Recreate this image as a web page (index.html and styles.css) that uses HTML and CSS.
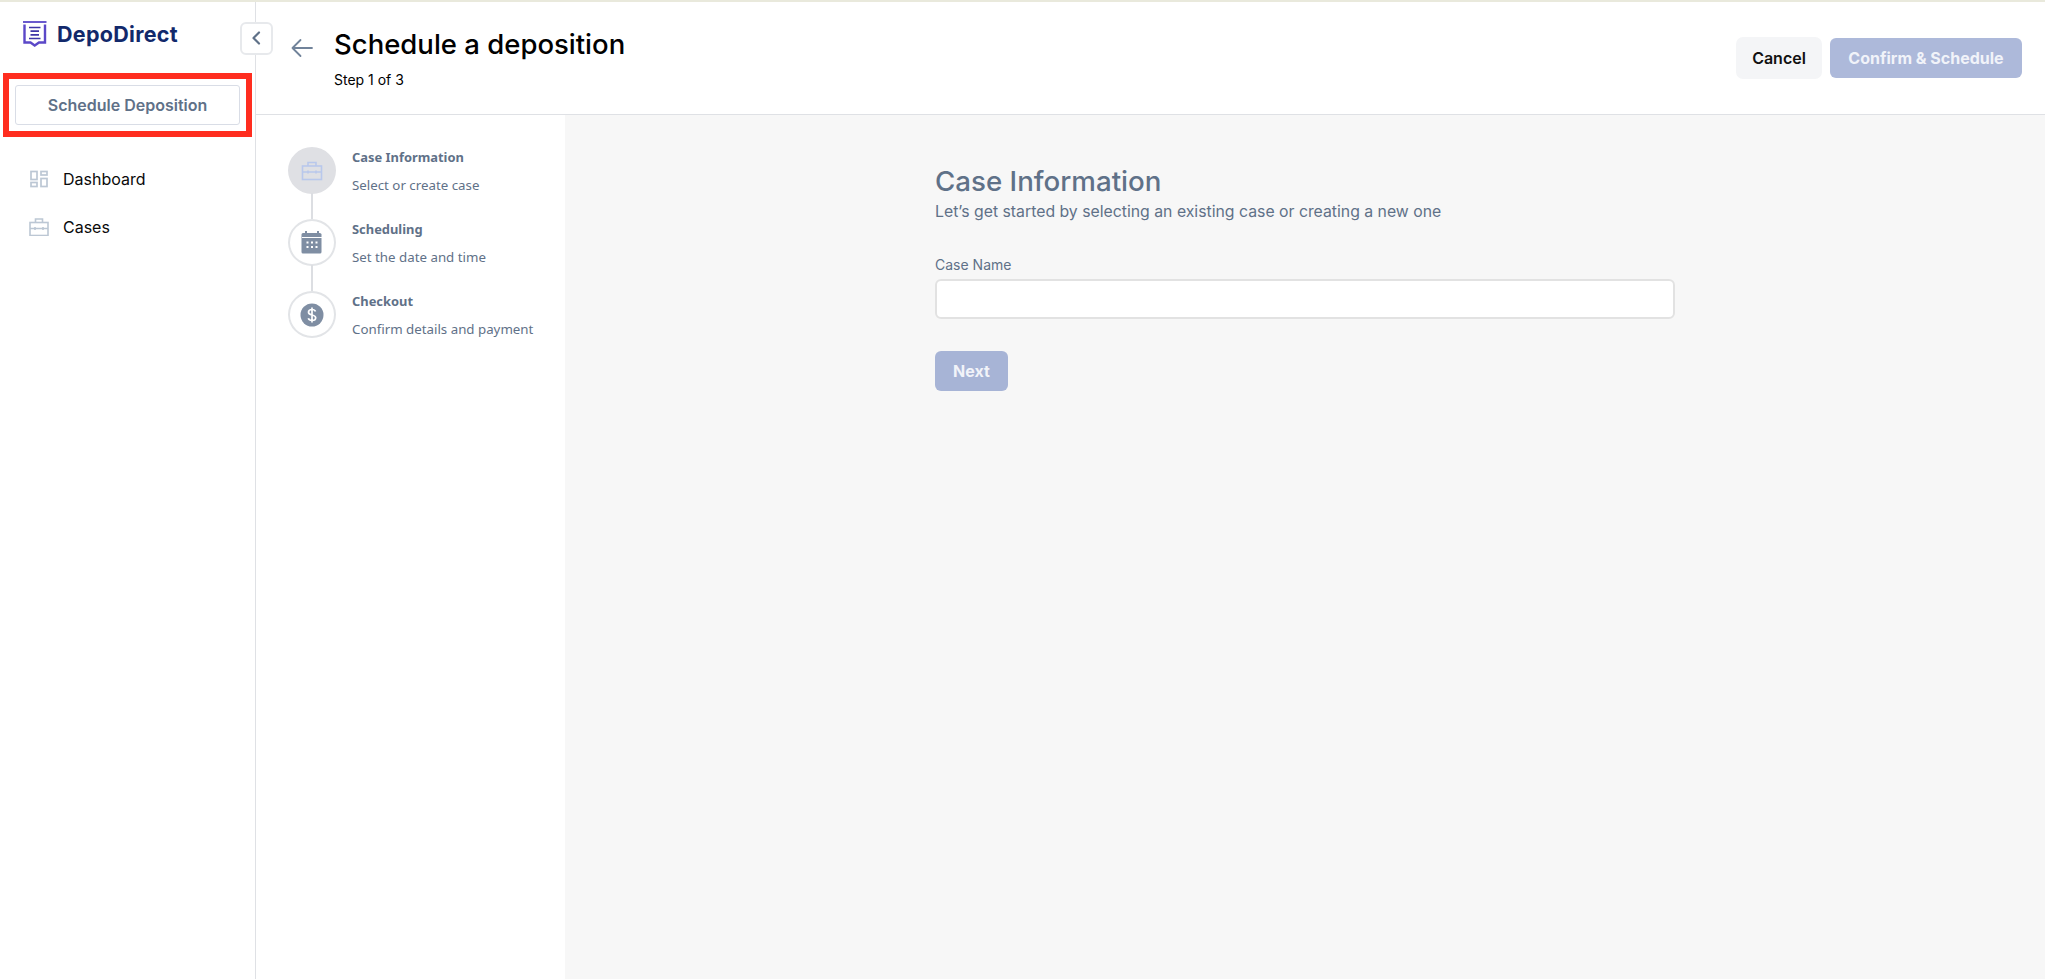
FILE: index.html
```html
<!DOCTYPE html>
<html lang="en">
<head>
<meta charset="utf-8">
<title>Schedule a deposition</title>
<link rel="stylesheet" href="styles.css">
</head>
<body>
<div class="topline"></div>
<div class="app">
  <aside class="sidebar">
    <div class="brand">
      <svg class="logo" width="24" height="27" viewBox="0 0 24 27" fill="none">
        <rect x="0" y="0" width="23.500" height="2" fill="#6a5acd"/>
        <path d="M1.500 3.500V21.500H7.500L11.700 24.500L16 21.500H22V3.500" stroke="#5b48c8" stroke-width="2.400"/>
        <path d="M6 6.500H17.500M7.500 10.200H16M7.500 13.800H16M6 17.500H17.500" stroke="#3f36a8" stroke-width="1.700"/>
      </svg>
      <span class="brand-name">DepoDirect</span>
    </div>
    <button class="collapse" type="button" aria-label="Collapse">
      <svg width="12" height="16" viewBox="0 0 12 16" fill="none"><path d="M9 2.500L3.500 8L9 13.500" stroke="#5f7188" stroke-width="2.200" stroke-linecap="round" stroke-linejoin="round"/></svg>
    </button>
    <div class="highlight"><button class="schedule" type="button">Schedule Deposition</button></div>
    <nav class="nav">
      <a class="nav-item">
        <svg width="20" height="18" viewBox="0 0 20 18" fill="none" stroke="#bcc7d4" stroke-width="1.700"><rect x="2" y="1.500" width="6" height="8"/><rect x="12" y="1.500" width="6" height="3.500"/><rect x="2" y="12.500" width="6" height="4"/><rect x="12" y="8.500" width="6" height="8"/></svg>
        <span>Dashboard</span>
      </a>
      <a class="nav-item">
        <svg width="20" height="18" viewBox="0 0 20 18" fill="none" stroke="#bcc7d4" stroke-width="1.600"><rect x="1" y="4.500" width="18" height="13"/><path d="M6.500 4.500V1H13.500V4.500M1 10.500H19M6 9V12M14 9V12"/></svg>
        <span>Cases</span>
      </a>
    </nav>
  </aside>
  <div class="content">
    <header class="header">
      <svg class="back" width="24" height="20" viewBox="0 0 24 20" fill="none"><path d="M22 10H2.500M10.500 2L2.500 10L10.500 18" stroke="#71839a" stroke-width="1.800" stroke-linecap="round" stroke-linejoin="round"/></svg>
      <div class="titles">
        <h1>Schedule a deposition</h1>
        <p>Step 1 of 3</p>
      </div>
      <div class="actions">
        <button class="btn-cancel" type="button">Cancel</button>
        <button class="btn-confirm" type="button">Confirm &amp; Schedule</button>
      </div>
    </header>
    <div class="body">
      <ol class="steps">
        <li class="step">
          <div class="circle active">
            <svg width="22" height="20" viewBox="0 0 22 20" fill="none" stroke="#b9c8ec" stroke-width="1.600"><rect x="1.500" y="5" width="19" height="13.500"/><path d="M7 5V1.500H15V5M1.500 11H20.500M7 9.500V12.500M15 9.500V12.500"/></svg>
          </div>
          <div class="step-text"><strong>Case Information</strong><span>Select or create case</span></div>
        </li>
        <li class="step">
          <div class="circle">
            <svg width="22" height="24" viewBox="0 0 22 24"><path fill="#7f8ea3" d="M4 0h2v2h10V0h2v2h1a3 3 0 0 1 1.500 1V21a1.500 1.500 0 0 1-1.500 1.500H2A1.500 1.500 0 0 1 .5 21V3.500A1.500 1.500 0 0 1 2 2h2z"/><path stroke="#fff" stroke-width="1" d="M1 6.500H21"/><path stroke="#fff" stroke-width="2" stroke-dasharray="2 2.500" d="M5.500 11.500H17M5.500 16H17"/></svg>
          </div>
          <div class="step-text"><strong>Scheduling</strong><span>Set the date and time</span></div>
        </li>
        <li class="step">
          <div class="circle">
            <svg width="24" height="24" viewBox="0 0 24 24"><circle cx="12" cy="12" r="11.500" fill="#7f8ea3"/><path d="M15.500 8.500C15 7 13.500 6.500 12 6.500C10 6.500 8.500 7.500 8.500 9.200C8.500 13 15.700 11 15.700 14.800C15.700 16.500 14 17.500 12 17.500C10.300 17.500 8.800 16.800 8.300 15.300M12 4.500V19.500" stroke="#fff" stroke-width="1.700" fill="none"/></svg>
          </div>
          <div class="step-text"><strong>Checkout</strong><span>Confirm details and payment</span></div>
        </li>
      </ol>
      <main class="main">
        <div class="form">
          <h2>Case Information</h2>
          <p class="lead">Let’s get started by selecting an existing case or creating a new one</p>
          <label class="label" for="case-name">Case Name</label>
          <input class="input" id="case-name" type="text">
          <button class="btn-next" type="button">Next</button>
        </div>
      </main>
    </div>
  </div>
</div>
</body>
</html>
```
FILE: styles.css
```css
* { box-sizing: border-box; }
html, body { margin: 0; height: 100%; overflow: hidden; }
body { background: #fff; font-family: Inter, "Liberation Sans", sans-serif; color: #000; }
button { font-family: inherit; cursor: pointer; }
.topline { height: 2px; background: #e9e9dc; }
.app { display: flex; height: 977px; }

.sidebar { position: relative; flex: 0 0 256px; min-width: 0; border-right: 1px solid #dfe1e5; padding: 0 0 0 3px; }
.brand { display: flex; align-items: center; gap: 10px; height: 71px; padding: 0 0 7px 20px; }
.brand-name { font-family: Inter, sans-serif; font-weight: 700; font-size: 21.500px; letter-spacing: 0.300px; color: #12296b; }
.collapse { position: absolute; top: 19.500px; left: 239.500px; width: 33px; height: 33px; display: flex; align-items: center; justify-content: center; padding: 0; background: #fff; border: 2px solid #e7e9ec; border-radius: 6px; z-index: 2; }
.highlight { width: 249px; height: 64px; border: 6px solid #ff2d1f; padding: 6px; }
.schedule { width: 100%; height: 100%; margin: 0; padding-bottom: 2px; background: #fff; border: 1px solid #d9dde6; border-radius: 3px; font-size: 16px; font-weight: 600; color: #5f7188; }
.nav { display: flex; flex-direction: column; gap: 19px; padding: 27.500px 0 0 26px; }
.nav-item { display: flex; align-items: center; gap: 14px; height: 29px; font-size: 16px; color: #0a0a0a; }

.content { flex: 1; display: flex; flex-direction: column; min-width: 0; }
.header { display: flex; align-items: center; flex: 0 0 113px; padding: 0 23px 1px 34px; border-bottom: 1px solid #dfe1e5; }
.back { margin-right: 20px; margin-bottom: 19px; }
.titles { flex: 1; padding-bottom: 1px; }
.titles h1 { margin: 0; font-size: 27.500px; line-height: 34px; font-weight: 500; letter-spacing: 0; }
.titles p { margin: 10px 0 0; font-size: 14px; line-height: 17px; }
.actions { display: flex; align-items: center; gap: 8px; }
.btn-cancel { width: 86px; height: 42px; border: 0; border-radius: 7px; background: #f4f5f7; font-size: 16px; font-weight: 600; color: #111; }
.btn-confirm { width: 192px; height: 40px; border: 0; border-radius: 6px; background: #adb9da; font-size: 16px; font-weight: 700; color: #f1f3f9; }

.body { flex: 1; display: flex; min-height: 0; }
.steps { flex: 0 0 309px; margin: 0; padding: 32px 0 0 32px; list-style: none; }
.step { position: relative; display: flex; gap: 16px; height: 72px; }
.step:not(:last-child)::after { content: ""; position: absolute; left: 23px; top: 46px; width: 2px; height: 26px; background: #dcdee2; }
.circle { flex: 0 0 48px; height: 47px; display: flex; align-items: center; justify-content: center; border: 2px solid #e2e4e7; border-radius: 50%; background: #fff; }
.circle.active { background: #dfe0e4; border-color: #dfe0e4; }
.step-text { display: flex; flex-direction: column; gap: 11px; font-family: "Noto Sans", sans-serif; line-height: 17px; color: #5f7188; margin-top: 2px; }
.step-text strong { font-weight: 700; font-size: 12.900px; }
.step-text span { font-size: 13.300px; }

.main { flex: 1; background: #f7f7f7; padding: 49px 0 0 370px; }
.form { width: 740px; }
.form h2 { margin: 0 0 4px; font-size: 27.700px; line-height: 34px; font-weight: 500; color: #5f7188; }
.lead { margin: 0; font-size: 15.800px; line-height: 20px; color: #5f7188; }
.label { display: block; margin-top: 34px; font-size: 14px; line-height: 17px; color: #5f7188; }
.input { display: block; width: 100%; height: 40px; margin-top: 6px; background: #fff; border: 2px solid #e2e2e2; border-radius: 6px; outline: 0; }
.btn-next { display: block; width: 73px; height: 40px; margin-top: 32px; padding: 0; border: 0; border-radius: 6px; background: #a7b4d6; font-size: 16px; font-weight: 700; color: #f1f3f9; }
```
